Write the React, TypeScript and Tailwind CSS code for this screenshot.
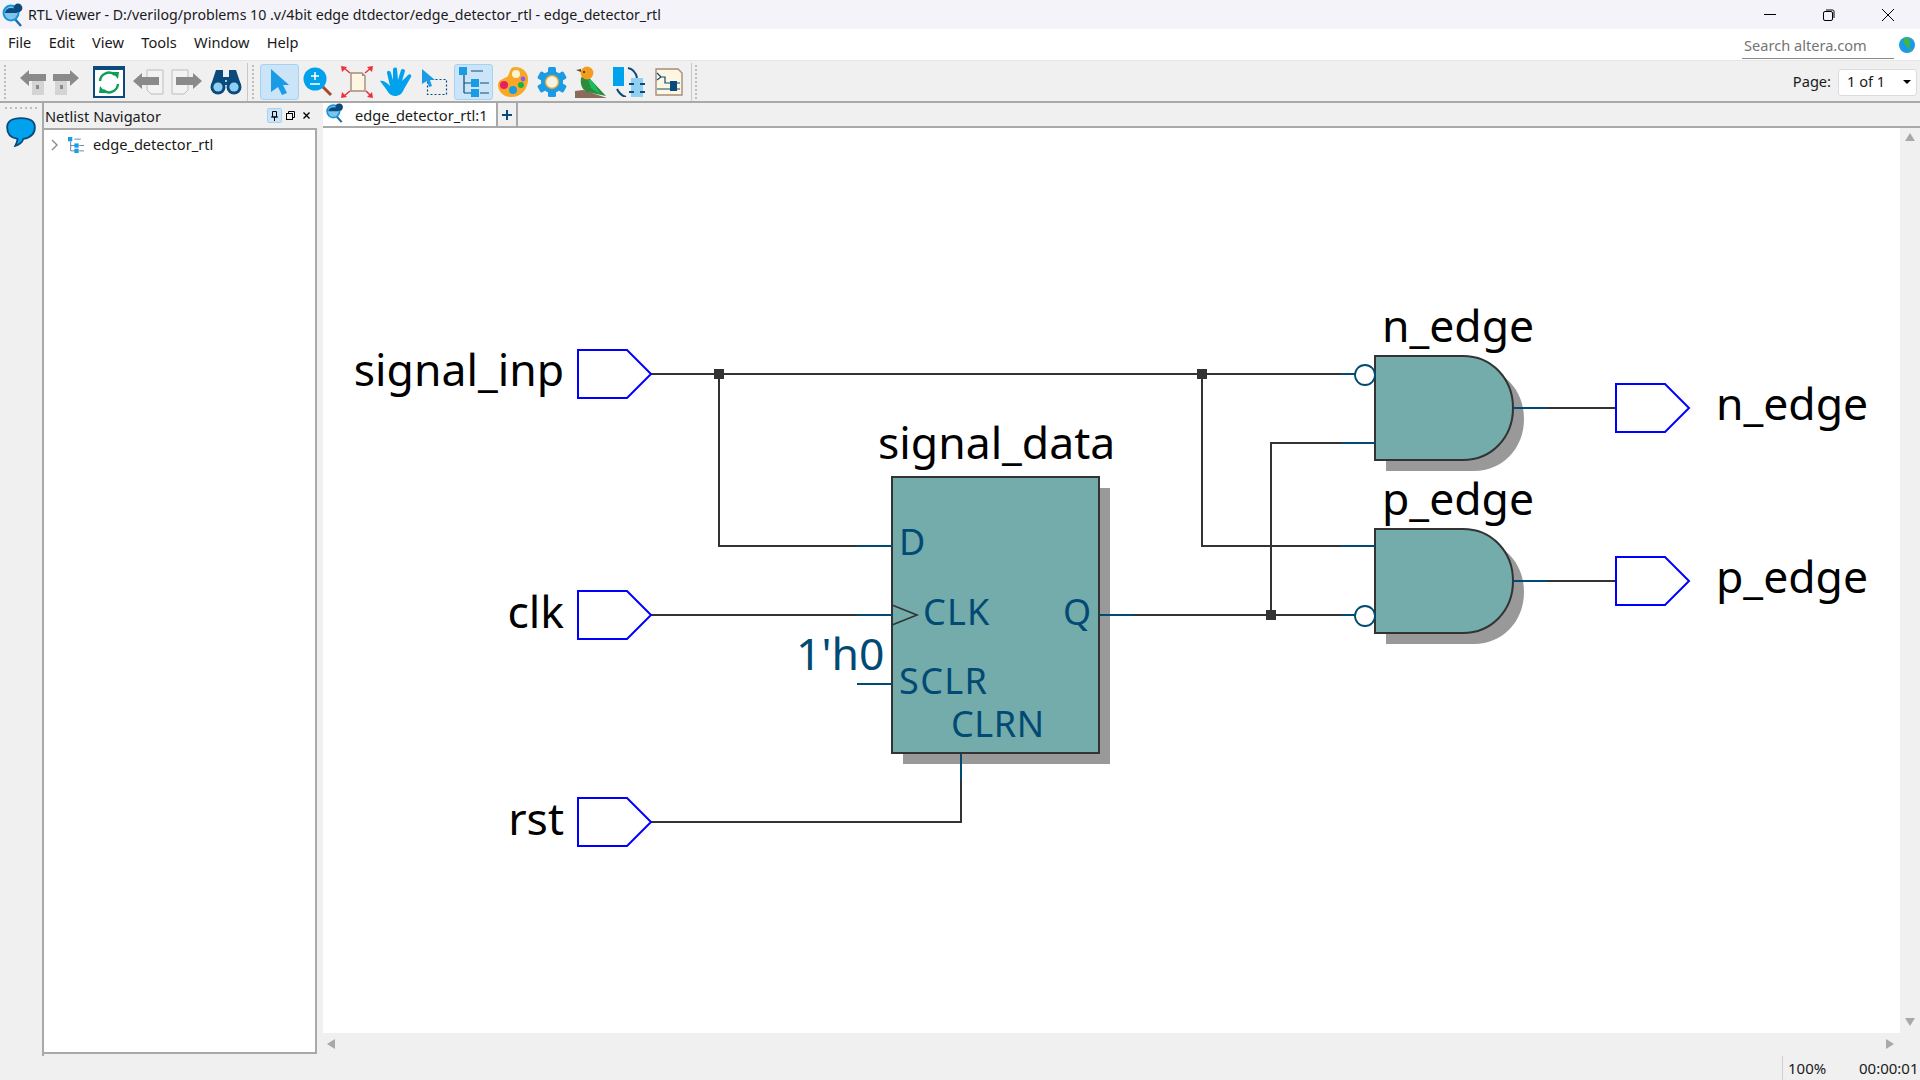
import type { ReactNode } from 'react';

const FONT = "font-['Noto_Sans','Open_Sans',sans-serif]";

const RtlLogo = ({ className = '' }: { className?: string }) => (
  <svg viewBox="0 0 22 24" className={className}>
    <path d="M12 15 L19 23" stroke="#1b6ca8" strokeWidth="2.4" />
    <circle cx="9" cy="10" r="7.5" fill="#7fc4ea" stroke="#1796dc" strokeWidth="2" />
    <path d="M3 10 a6 5 0 0 1 12 0 z" fill="#0b4a7c" />
    <circle cx="16" cy="5" r="4.4" fill="#0b4a7c" />
  </svg>
);

const Grip = ({ vertical = true }: { vertical?: boolean }) => (
  <div className={vertical ? 'flex flex-col gap-[2px]' : 'flex gap-[3px]'}>
    {Array.from({ length: vertical ? 9 : 7 }).map((_, i) => (
      <span key={i} className="w-[2px] h-[2px] bg-[#bdbdbd]" />
    ))}
  </div>
);

const ToolButton = ({ active, children }: { active?: boolean; children: ReactNode }) => (
  <div className={`w-[39px] h-[36px] shrink-0 flex items-center justify-center rounded-[3px] border ${active ? 'bg-[#cce4f7] border-[#a6d2f2]' : 'border-transparent'}`}>
    {children}
  </div>
);

const HistoryIcon = ({ flip }: { flip?: boolean }) => (
  <svg width="28" height="26" viewBox="0 0 28 26" className={flip ? '-scale-x-100' : ''}>
    <path d="M1 9 L10 1 V5 H27 V12 H10 V17 Z" fill="#8a8a8a" />
    <rect x="13" y="12" width="12" height="14" fill="#d4d4d4" />
    <rect x="17" y="16" width="3" height="4" fill="#8a8a8a" />
  </svg>
);

const PageArrowIcon = ({ flip }: { flip?: boolean }) => (
  <svg width="32" height="26" viewBox="0 0 32 26" className={flip ? '-scale-x-100' : ''}>
    <path d="M15 1 H31 V25 H19 L15 21 Z" fill="#f3f3f3" stroke="#bdbdbd" />
    <path d="M1 12 L10 4 V8 H27 V16 H10 V20 Z" fill="#8a8a8a" />
  </svg>
);

const RefreshIcon = () => (
  <svg width="32" height="32" viewBox="0 0 32 32">
    <rect x="1" y="1" width="30" height="30" fill="#fff" stroke="#0b4a7c" strokeWidth="2" />
    <rect x="1" y="1" width="30" height="3" fill="#0b4a7c" />
    <path d="M7 15 a9 9 0 0 1 15 -6" fill="none" stroke="#0f9d58" strokeWidth="2.4" />
    <path d="M25 18 a9 9 0 0 1 -15 6" fill="none" stroke="#0f9d58" strokeWidth="2.4" />
    <path d="M19 6 L26 6 L25 13 Z M13 27 L6 27 L7 20 Z" fill="#0f9d58" />
  </svg>
);

const BinocularIcon = () => (
  <svg width="32" height="26" viewBox="0 0 32 26">
    <path d="M6 1 H13 V8 H19 V1 H26 L31 16 H1 Z" fill="#0b4a7c" />
    <circle cx="8" cy="18" r="7.5" fill="#0b4a7c" />
    <circle cx="24" cy="18" r="7.5" fill="#0b4a7c" />
    <circle cx="8" cy="18" r="4.6" fill="#8fd0f2" />
    <circle cx="24" cy="18" r="4.6" fill="#8fd0f2" />
    <rect x="15" y="11" width="2" height="2" fill="#8fd0f2" />
  </svg>
);

const SelectIcon = () => (
  <svg width="20" height="28" viewBox="0 0 20 28">
    <path d="M1 1 L19 17 H13 L17 25 L12 27 L8 19 L1 24 Z" fill="#1a9be6" />
  </svg>
);

const ZoomIcon = () => (
  <svg width="30" height="30" viewBox="0 0 30 30">
    <path d="M18 18 L28 28" stroke="#a8492a" strokeWidth="3" />
    <circle cx="12" cy="12" r="11.5" fill="#00a2ed" />
    <path d="M12 5 V13 M8 9 H16 M7 17 H17" stroke="#fff" strokeWidth="1.5" />
  </svg>
);

const FitIcon = () => (
  <svg width="34" height="32" viewBox="0 0 34 32">
    <path d="M11 7 H22 L25 10 V25 H11 Z" fill="#fdf6e0" stroke="#a68b7c" strokeWidth="1.4" />
    <path d="M22 7 L25 10 H22 Z" fill="#a68b7c" />
    <path d="M10 7 L4 2 M25 7 L31 2 M10 25 L4 30 M26 25 L31 30" stroke="#ee3138" strokeWidth="1.5" />
    <path d="M1 0 L7 1 L2 6 Z M33 0 L27 1 L32 6 Z M1 32 L7 31 L2 26 Z M33 32 L27 31 L32 26 Z" fill="#ee3138" />
  </svg>
);

const HandIcon = () => (
  <svg width="32" height="30" viewBox="0 0 32 30">
    <path d="M0 14 C4 13 8 17 10 19 L7 6 C7 3 10 3 11 6 L13 13 L13 2 C14 0 17 0 17 2 L18 13 L21 3 C22 1 25 2 25 4 L22 14 L28 8 C30 6 32 8 31 10 L24 22 C22 27 19 29 15 29 C10 29 8 25 6 22 Z" fill="#00a2ed" />
  </svg>
);

const RegionIcon = () => (
  <svg width="27" height="28" viewBox="0 0 27 28">
    <rect x="6.5" y="11.5" width="19" height="15" fill="none" stroke="#0b4a7c" strokeWidth="1.2" strokeDasharray="2 2" />
    <path d="M1 1 L14 12 H9 L11 18 L8 19 L6 13 L1 16 Z" fill="#1a9be6" />
  </svg>
);

const TreeIcon = ({ size = 30 }: { size?: number }) => (
  <svg width={size} height={size} viewBox="0 0 30 30">
    <path d="M5 8 V26 M5 16 H14 M5 26 H14 M12 4 H24 M21 16 H30 M21 26 H30" stroke="#0b4a7c" strokeWidth="1.2" fill="none" />
    <rect x="0" y="0" width="8" height="8" fill="#1a9be6" />
    <rect x="12" y="12" width="8" height="8" fill="#1a9be6" />
    <rect x="12" y="22" width="8" height="8" fill="#1a9be6" />
  </svg>
);

const PaletteIcon = () => (
  <svg width="32" height="32" viewBox="0 0 32 32">
    <path d="M18 1 C27 1 32 8 31 15 C30 23 25 31 14 31 C6 31 1 25 1 19 C1 13 8 13 11 10 C13 6 13 1 18 1 Z" fill="#f9a825" />
    <circle cx="19" cy="8" r="4" fill="#fff3d6" />
    <circle cx="7" cy="19" r="4" fill="#e91e63" />
    <circle cx="16" cy="24" r="4" fill="#1a9be6" />
    <circle cx="24" cy="19" r="3" fill="#18b04a" />
    <circle cx="26" cy="13" r="2.4" fill="#8e5bf0" />
  </svg>
);

const GearIcon = () => (
  <svg width="30" height="30" viewBox="0 0 30 30">
    <g fill="#1a9be6">
      <rect x="11" y="0" width="8" height="30" rx="1.5" />
      <rect x="11" y="0" width="8" height="30" rx="1.5" transform="rotate(60 15 15)" />
      <rect x="11" y="0" width="8" height="30" rx="1.5" transform="rotate(120 15 15)" />
    </g>
    <circle cx="15" cy="15" r="11" fill="#1a9be6" />
    <circle cx="15" cy="15" r="6.5" fill="#f7f3e3" stroke="#e0a63a" strokeWidth="1.4" />
  </svg>
);

const BirdIcon = () => (
  <svg width="32" height="32" viewBox="0 0 32 32">
    <path d="M0 32 V25 L8 24 L32 32 Z" fill="#8a6b5c" />
    <path d="M6 12 C8 8 14 10 16 14 L31 30 L12 26 C7 24 5 18 6 12 Z" fill="#2e8b3a" />
    <path d="M13 13 C18 15 22 22 25 28 L16 22 Z" fill="#15c060" />
    <circle cx="12" cy="7" r="6.4" fill="#f39c1f" />
    <path d="M6 6 L1 4 L6 3 Z" fill="#5a4032" />
    <circle cx="9" cy="6" r="1" fill="#222" />
  </svg>
);

const BlocksIcon = () => (
  <svg width="34" height="30" viewBox="0 0 34 30">
    <rect x="0" y="0" width="11" height="19" fill="#00a2ed" />
    <path d="M15 1 C20 2 23 6 24 11 M4 22 C6 26 9 29 13 30" fill="none" stroke="#0b4a7c" strokeWidth="2" />
    <rect x="18" y="11" width="12" height="19" fill="#8fd0f2" />
    <path d="M16 17 H21 M27 17 H32 M16 25 H21 M27 25 H32" stroke="#0b4a7c" strokeWidth="2" />
  </svg>
);

const SchematicIcon = () => (
  <svg width="28" height="28" viewBox="0 0 28 28">
    <path d="M1 1 H23 L27 5 V27 H1 Z" fill="#fdf6e0" stroke="#a68b7c" strokeWidth="1.4" />
    <path d="M2 5 L6 9 L2 12 M6 9 H10 V15 H25 M2 21 H25" fill="none" stroke="#0b4a7c" strokeWidth="1.2" />
    <rect x="15" y="13" width="7" height="10" fill="#0b4a7c" />
  </svg>
);

const GlobeIcon = () => (
  <svg width="16" height="16" viewBox="0 0 16 16">
    <circle cx="8" cy="8" r="8" fill="#1a9be6" />
    <path d="M5 1 C8 0 12 2 11 5 C10 7 12 8 10 11 C9 12 8 10 7 8 C5 7 4 5 5 1 Z M11 11 L13 12 L10 15 Z" fill="#3fb54a" />
  </svg>
);

const ChatIcon = () => (
  <svg width="30" height="30" viewBox="2 2 26 26">
    <path d="M15 3 C23 3 27 6 27 11 C27 17 22 20 17 21 C16 24 13 26 10 27 C11 25 12 23 12 21 C6 20 3 16 3 11 C3 6 7 3 15 3 Z" fill="#00a2ed" stroke="#0b4a7c" strokeWidth="1.6" />
  </svg>
);

const Triangle = ({ dir }: { dir: 'up' | 'down' | 'left' | 'right' }) => {
  const points = { up: '0,8 5,0 10,8', down: '0,0 5,8 10,0', left: '8,0 8,10 0,5', right: '0,0 0,10 8,5' }[dir];
  return (
    <svg width="10" height="10" viewBox="0 0 10 10">
      <polygon points={points} fill="#a8a8a8" />
    </svg>
  );
};

const Gate = ({ y }: { y: number }) => (
  <>
    <path d={`M1386 ${y + 11} H1474 C1502 ${y + 11} 1524 ${y + 33} 1524 ${y + 63} C1524 ${y + 93} 1502 ${y + 115} 1474 ${y + 115} H1386 Z`} fill="#999999" />
    <path d={`M1375 ${y} H1463 C1491 ${y} 1513 ${y + 22} 1513 ${y + 52} C1513 ${y + 82} 1491 ${y + 104} 1463 ${y + 104} H1375 Z`} fill="#74abab" stroke="#333333" strokeWidth="2" />
  </>
);

const Pin = ({ x, y }: { x: number; y: number }) => (
  <path d={`M${x} ${y - 24} H${x + 49} L${x + 73} ${y} L${x + 49} ${y + 24} H${x} Z`} fill="#fff" stroke="#0000ff" strokeWidth="2" />
);

const Wire = ({ d, port }: { d: string; port?: boolean }) => (
  <path d={d} fill="none" stroke={port ? '#004a73' : '#333333'} strokeWidth="2" />
);

const Junction = ({ x, y }: { x: number; y: number }) => <rect x={x - 5} y={y - 5} width="10" height="10" fill="#333333" />;

const Label = ({ x, y, anchor, size = 44.5, fill = '#000', spacing, children }: { x: number; y: number; anchor?: 'end'; size?: number; fill?: string; spacing?: number; children: string }) => (
  <text x={x} y={y} textAnchor={anchor} fontSize={size} fill={fill} letterSpacing={spacing} fontFamily="'Noto Sans', sans-serif">
    {children}
  </text>
);

const Schematic = () => (
  <svg viewBox="323 128 1577 905" className="block w-full h-full">
    <rect x="903" y="488" width="207" height="276" fill="#999999" />
    <rect x="892" y="477" width="207" height="276" fill="#74abab" stroke="#333333" strokeWidth="2" />
    <path d="M892 605 L917 615 L892 625" fill="none" stroke="#333333" strokeWidth="1.6" />
    <Gate y={356} />
    <Gate y={529} />

    <Wire d="M651 374 H1355" />
    <Wire d="M719 374 V546 H892" />
    <Wire d="M1202 374 V546 H1375" />
    <Wire d="M1375 443 H1271 V615" />
    <Wire d="M651 615 H892" />
    <Wire d="M1099 615 H1355" />
    <Wire d="M651 822 H961 V754" />
    <Wire d="M1513 408 H1616" />
    <Wire d="M1513 581 H1616" />

    <Wire port d="M857 546 H892 M857 615 H892 M857 684 H892 M961 754 V780 M1099 615 H1133" />
    <Wire port d="M1341 374 H1355 M1341 443 H1375 M1341 546 H1375 M1341 615 H1355 M1513 408 H1547 M1513 581 H1547" />

    <circle cx="1365" cy="375" r="10" fill="#fff" stroke="#004a73" strokeWidth="1.8" />
    <circle cx="1365" cy="616" r="10" fill="#fff" stroke="#004a73" strokeWidth="1.8" />

    <Junction x={719} y={374} />
    <Junction x={1202} y={374} />
    <Junction x={1271} y={615} />

    <Pin x={578} y={374} />
    <Pin x={578} y={615} />
    <Pin x={578} y={822} />
    <Pin x={1616} y={408} />
    <Pin x={1616} y={581} />

    <Label x={564} y={386} anchor="end">signal_inp</Label>
    <Label x={564} y={628} anchor="end">clk</Label>
    <Label x={564} y={835} anchor="end">rst</Label>
    <Label x={878} y={459}>signal_data</Label>
    <Label x={1382} y={342}>n_edge</Label>
    <Label x={1382} y={515}>p_edge</Label>
    <Label x={1716} y={420}>n_edge</Label>
    <Label x={1716} y={593}>p_edge</Label>

    <Label x={899} y={555} size={36} fill="#004a73">D</Label>
    <Label x={923} y={625} size={36} spacing={1.2} fill="#004a73">CLK</Label>
    <Label x={1091} y={625} size={36} fill="#004a73" anchor="end">Q</Label>
    <Label x={899} y={694} size={36} spacing={1.4} fill="#004a73">SCLR</Label>
    <Label x={951} y={737} size={36} spacing={0.6} fill="#004a73">CLRN</Label>
    <Label x={796} y={670} fill="#004a73">1'h0</Label>
  </svg>
);

export default function App() {
  return (
    <div className={`${FONT} w-[1920px] h-[1080px] flex flex-col overflow-hidden bg-[#f0f0f0] text-black`}>
      {/* title bar */}
      <div className="h-[29px] shrink-0 flex items-center bg-[#f3f3f9] pl-[2px]">
        <RtlLogo className="w-[22px] h-[24px]" />
        <span className="ml-[4px] text-[14.2px] text-[#1a1a1a]">RTL Viewer - D:/verilog/problems 10 .v/4bit edge dtdector/edge_detector_rtl - edge_detector_rtl</span>
        <div className="ml-auto flex items-center h-full pr-[3px]">
          <div className="w-[58px] flex justify-center"><span className="block w-[12px] h-[1px] bg-black" /></div>
          <div className="w-[59px] flex justify-center">
            <svg width="12" height="12" viewBox="0 0 12 12" fill="none" stroke="#000">
              <rect x="0.5" y="2.5" width="9" height="9" rx="1.5" />
              <path d="M3 1 H9.5 A1.5 1.5 0 0 1 11 2.5 V9" />
            </svg>
          </div>
          <div className="w-[59px] flex justify-center">
            <svg width="12" height="12" viewBox="0 0 12 12" stroke="#000"><path d="M0 0 L12 12 M12 0 L0 12" /></svg>
          </div>
        </div>
      </div>

      {/* menu bar */}
      <div className="h-[32px] shrink-0 flex items-center bg-white border-b border-[#e6e6e6] text-[14.6px] text-[#1a1a1a]">
        <div className="flex gap-[17.3px] pl-[8px] -mt-[3px]">
          <span>File</span>
          <span>Edit</span>
          <span>View</span>
          <span>Tools</span>
          <span>Window</span>
          <span>Help</span>
        </div>
        <div className="ml-auto flex items-center">
          <div className="w-[152px] h-[26px] mt-[2px] pt-[1px] border-b border-[#8a8a8a] bg-white text-[#757575] pl-[2px] flex items-center">Search altera.com</div>
          <div className="w-[26px] flex justify-center"><GlobeIcon /></div>
        </div>
      </div>

      {/* toolbar */}
      <div className="h-[42px] shrink-0 flex items-center pt-[2px] bg-[#f0f0f0] border-b-2 border-[#a9a9a9]">
        <div className="ml-[4px] mr-[7px]"><Grip /></div>
        <div className="flex items-center">
          <ToolButton><HistoryIcon /></ToolButton>
          <div className="-ml-[6px] mr-[4px]"><ToolButton><HistoryIcon flip /></ToolButton></div>
          <ToolButton><RefreshIcon /></ToolButton>
          <ToolButton><PageArrowIcon /></ToolButton>
          <ToolButton><PageArrowIcon flip /></ToolButton>
          <ToolButton><BinocularIcon /></ToolButton>
        </div>
        <div className="w-[1px] h-full bg-[#c8c8c8] ml-[2px]" />
        <div className="ml-[4px] mr-[6px]"><Grip /></div>
        <div className="flex items-center">
          <ToolButton active><SelectIcon /></ToolButton>
          <div className="-ml-[1px]"><ToolButton><ZoomIcon /></ToolButton></div>
          <ToolButton><FitIcon /></ToolButton>
          <ToolButton><HandIcon /></ToolButton>
          <ToolButton><RegionIcon /></ToolButton>
          <ToolButton active><TreeIcon /></ToolButton>
          <ToolButton><PaletteIcon /></ToolButton>
          <ToolButton><GearIcon /></ToolButton>
          <ToolButton><BirdIcon /></ToolButton>
          <ToolButton><BlocksIcon /></ToolButton>
          <ToolButton><SchematicIcon /></ToolButton>
        </div>
        <div className="w-[1px] h-full bg-[#c8c8c8] ml-[3px]" />
        <div className="ml-[3px]"><Grip /></div>
        <div className="ml-auto flex items-center text-[14.6px] text-[#1a1a1a]">
          <span className="mr-[7px]">Page:</span>
          <div className="w-[79px] h-[27px] mr-[3px] bg-white border border-[#dcdcdc] rounded-[3px] flex items-center pl-[8px]">
            <span>1 of 1</span>
            <span className="ml-auto mr-[5px] w-0 h-0 border-l-[4px] border-r-[4px] border-t-[4px] border-l-transparent border-r-transparent border-t-black" />
          </div>
        </div>
      </div>

      {/* main */}
      <div className="flex-1 min-h-0 flex text-[14.6px] text-[#1a1a1a]">
        <div className="w-[44px] shrink-0 flex flex-col items-center border-r-2 border-[#a9a9a9] pt-[4px]">
          <Grip vertical={false} />
          <div className="mt-[8px]"><ChatIcon /></div>
        </div>

        <div className="w-[273px] shrink-0 flex flex-col">
          <div className="h-[27px] shrink-0 flex items-center border-b-2 border-[#a9a9a9] pl-[1px] pt-[3px]">
            <span>Netlist Navigator</span>
            <div className="ml-auto flex items-center gap-[4px] pr-[7px] -mt-[3px]">
              <div className="w-[15px] h-[15px] rounded-[2px] bg-[#cce4f7] border border-[#a6d2f2] flex items-center justify-center">
                <svg width="7" height="10" viewBox="0 0 7 10" fill="none" stroke="#000"><path d="M1.5 .5 H5.5 V6 H1.5 Z M0 6 H7 M3.5 6 V10" /></svg>
              </div>
              <svg width="9" height="9" viewBox="0 0 9 9" fill="none" stroke="#000"><rect x="0.5" y="2.5" width="6" height="6" /><path d="M2.5 2 V.5 H8.5 V6.5 H7" /></svg>
              <svg width="7" height="7" viewBox="0 0 7 7" stroke="#000" strokeWidth="1.4" className="ml-[4px]"><path d="M0.5 .5 L6.5 6.5 M6.5 .5 L.5 6.5" /></svg>
            </div>
          </div>
          <div className="flex-1 bg-white border-r-2 border-b-2 border-[#a9a9a9] mb-[2px]">
            <div className="flex items-center h-[29px]">
              <svg width="8" height="12" viewBox="0 0 8 12" fill="none" stroke="#8a8a8a" strokeWidth="1.4" className="ml-[7px]"><path d="M1 1 L6 6 L1 11" /></svg>
              <div className="ml-[9px] w-[16px] h-[16px] flex items-center"><TreeIcon size={16} /></div>
              <span className="ml-[9px]">edge_detector_rtl</span>
            </div>
          </div>
        </div>

        <div className="w-[6px] shrink-0" />

        <div className="flex-1 min-w-0 flex flex-col">
          <div className="h-[25px] shrink-0 flex border-b-2 border-[#a9a9a9]">
            <div className="w-[175px] flex items-center bg-white border-r-2 border-[#a9a9a9] pt-[2px]">
              <RtlLogo className="w-[20px] h-[20px] ml-[2px] -mt-[6px]" />
              <span className="ml-[10px]">edge_detector_rtl:1</span>
            </div>
            <div className="w-[20px] border-r-2 border-[#a9a9a9] flex items-center justify-center">
              <svg width="12" height="12" viewBox="0 0 12 12" stroke="#0b4a7c" strokeWidth="2"><path d="M6 1 V11 M1 6 H11" /></svg>
            </div>
          </div>
          <div className="flex-1 min-h-0 flex">
            <div className="flex-1 min-w-0 bg-white"><Schematic /></div>
            <div className="w-[20px] shrink-0 flex flex-col items-center justify-between pt-[5px] pb-[5px]">
              <Triangle dir="up" />
              <Triangle dir="down" />
            </div>
          </div>
          <div className="h-[23px] shrink-0 flex items-center justify-between pl-[4px] pr-[24px] pb-[2px]">
            <Triangle dir="left" />
            <Triangle dir="right" />
          </div>
        </div>
      </div>

      {/* status bar */}
      <div className="h-[24px] shrink-0 flex items-center justify-end text-[15px] text-[#1a1a1a]">
        <div className="h-full w-[1px] bg-[#d0d0d0]" />
        <span className="w-[71px] pl-[5px]">100%</span>
        <span className="w-[66px] pl-[5px]">00:00:01</span>
      </div>
    </div>
  );
}
